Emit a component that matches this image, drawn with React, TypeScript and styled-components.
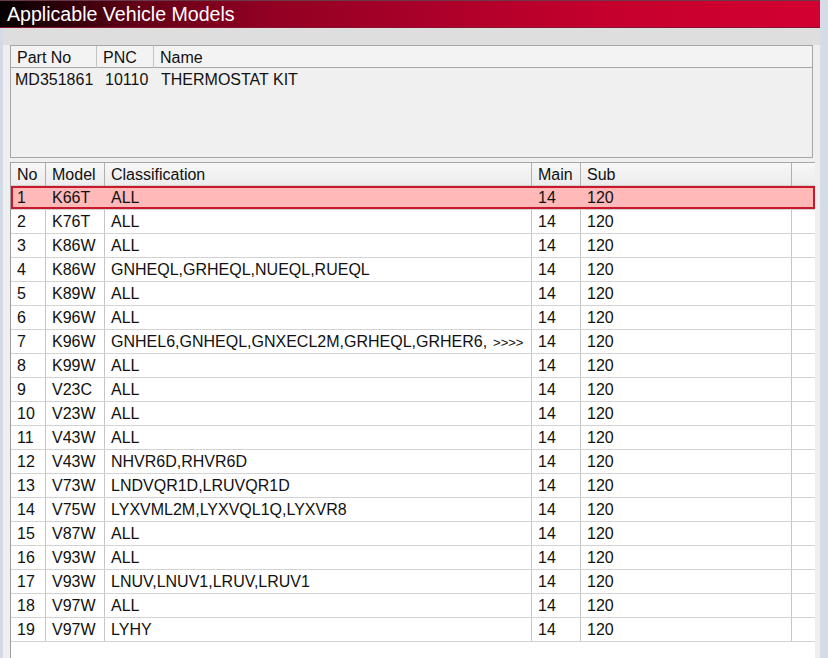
import React from "react";
import styled, { createGlobalStyle } from "styled-components";

const Global = createGlobalStyle`
  html, body { margin: 0; padding: 0; background: #d6dce6; }
  body { font-family: "Liberation Sans", Arial, sans-serif; }
`;

const Window = styled.div`
  width: 828px;
  height: 658px;
  display: flex;
  flex-direction: column;
  background: #d6dce6;
  overflow: hidden;
`;

const TitleBar = styled.div`
  width: 820px;
  height: 28px;
  flex: none;
  box-sizing: border-box;
  padding-left: 7px;
  padding-top: 1px;
  display: flex;
  align-items: center;
  color: #fff;
  font-size: 19.6px;
  border-top: 1px solid #6b3a4a;
  border-bottom: 1px solid #8a1030;
  background: linear-gradient(
    to right,
    #050002 0%,
    #2a0008 7%,
    #640017 17%,
    #900022 32%,
    #ae002a 55%,
    #c6002d 75%,
    #d20030 100%
  );
`;

const Body = styled.div`
  flex: 1;
  display: flex;
  min-height: 0;
`;

const LeftEdge = styled.div`
  width: 3px;
  flex: none;
  background: #d3dbe7;
`;

const Main = styled.div`
  width: 817px;
  flex: none;
  display: flex;
  flex-direction: column;
  background: #efefef;
  min-height: 0;
`;

const TopStrip = styled.div`
  height: 17px;
  flex: none;
  background: #dedede;
`;

const PartPanel = styled.div`
  margin: 0 7px 0 7px;
  height: 113px;
  flex: none;
  box-sizing: border-box;
  border: 1px solid #a6a6a6;
  background: #f0f0f0;
  display: flex;
  flex-direction: column;
`;

const PartHeader = styled.div`
  display: grid;
  grid-template-columns: 86px 57px 1fr;
  height: 21px;
  border-bottom: 1px solid #a6a6a6;
  background: #f3f3f3;
`;

const PartHeadCell = styled.div<{ $last?: boolean }>`
  font-size: 16px;
  color: #111;
  padding-left: 6px;
  padding-top: 1px;
  line-height: 21px;
  border-right: ${(p) => (p.$last ? "none" : "1px solid #c4c4c4")};
  white-space: nowrap;
`;

const PartRow = styled.div`
  display: grid;
  grid-template-columns: 90px 56px 1fr;
  height: 24px;
`;

const PartCell = styled.div`
  font-size: 16px;
  color: #111;
  padding-left: 4px;
  line-height: 24px;
  white-space: nowrap;
`;

const Gap = styled.div`
  height: 4px;
  flex: none;
`;

const GridArea = styled.div`
  margin-left: 7px;
  width: 805px;
  flex: 1;
  background: #ffffff;
  border-left: 1px solid #9c9c9c;
  border-top: 1px solid #a6a6a6;
  box-sizing: border-box;
  display: flex;
  flex-direction: column;
`;

const COLS = "35px 59px 427px 49px 211px 1fr";

const HeaderRow = styled.div`
  display: grid;
  grid-template-columns: ${COLS};
  height: 22px;
  background: linear-gradient(#f7f7f7, #ececec);
  border-bottom: 1px solid #d0d0d0;
`;

const HeadCell = styled.div<{ $last?: boolean }>`
  font-size: 16px;
  color: #111;
  padding-left: 6px;
  padding-top: 1px;
  line-height: 22px;
  border-right: ${(p) => (p.$last ? "none" : "1px solid #b0b0b0")};
  white-space: nowrap;
`;

const Row = styled.div<{ $selected?: boolean }>`
  display: grid;
  grid-template-columns: ${COLS};
  height: 24px;
  box-sizing: border-box;
  border-bottom: 1px solid #d2d2d2;
  background: ${(p) => (p.$selected ? "#ffb9b9" : "#ffffff")};
  box-shadow: ${(p) => (p.$selected ? "inset 0 0 0 2px #c8192b" : "none")};
`;

const Cell = styled.div<{ $last?: boolean; $hideLine?: boolean }>`
  font-size: 16px;
  color: #111;
  padding-left: 6px;
  line-height: 23px;
  white-space: nowrap;
  overflow: hidden;
  border-right: ${(p) =>
    p.$last || p.$hideLine ? "none" : "1px solid #c6c6c6"};
`;

const More = styled.span`
  font-size: 13px;
  margin-left: 6px;
`;

const RightEdge = styled.div`
  flex: 1;
  background: #d6dce6;
`;

type Item = { no: number; model: string; cls: string; more?: boolean };

const items: Item[] = [
  { no: 1, model: "K66T", cls: "ALL" },
  { no: 2, model: "K76T", cls: "ALL" },
  { no: 3, model: "K86W", cls: "ALL" },
  { no: 4, model: "K86W", cls: "GNHEQL,GRHEQL,NUEQL,RUEQL" },
  { no: 5, model: "K89W", cls: "ALL" },
  { no: 6, model: "K96W", cls: "ALL" },
  {
    no: 7,
    model: "K96W",
    cls: "GNHEL6,GNHEQL,GNXECL2M,GRHEQL,GRHER6,",
    more: true,
  },
  { no: 8, model: "K99W", cls: "ALL" },
  { no: 9, model: "V23C", cls: "ALL" },
  { no: 10, model: "V23W", cls: "ALL" },
  { no: 11, model: "V43W", cls: "ALL" },
  { no: 12, model: "V43W", cls: "NHVR6D,RHVR6D" },
  { no: 13, model: "V73W", cls: "LNDVQR1D,LRUVQR1D" },
  { no: 14, model: "V75W", cls: "LYXVML2M,LYXVQL1Q,LYXVR8" },
  { no: 15, model: "V87W", cls: "ALL" },
  { no: 16, model: "V93W", cls: "ALL" },
  { no: 17, model: "V93W", cls: "LNUV,LNUV1,LRUV,LRUV1" },
  { no: 18, model: "V97W", cls: "ALL" },
  { no: 19, model: "V97W", cls: "LYHY" },
];

export default function App() {
  return (
    <Window>
      <Global />
      <TitleBar>Applicable Vehicle Models</TitleBar>
      <Body>
        <LeftEdge />
        <Main>
          <TopStrip />
          <PartPanel>
            <PartHeader>
              <PartHeadCell>Part No</PartHeadCell>
              <PartHeadCell>PNC</PartHeadCell>
              <PartHeadCell $last>Name</PartHeadCell>
            </PartHeader>
            <PartRow>
              <PartCell>MD351861</PartCell>
              <PartCell>10110</PartCell>
              <PartCell>THERMOSTAT KIT</PartCell>
            </PartRow>
          </PartPanel>
          <Gap />
          <GridArea>
            <HeaderRow>
              <HeadCell>No</HeadCell>
              <HeadCell>Model</HeadCell>
              <HeadCell>Classification</HeadCell>
              <HeadCell>Main</HeadCell>
              <HeadCell>Sub</HeadCell>
              <HeadCell $last />
            </HeaderRow>
            {items.map((it) => {
              const sel = it.no === 1;
              return (
                <Row key={it.no} $selected={sel}>
                  <Cell $hideLine={sel}>{it.no}</Cell>
                  <Cell $hideLine={sel}>{it.model}</Cell>
                  <Cell $hideLine={sel}>
                    {it.cls}
                    {it.more && <More>&gt;&gt;&gt;&gt;</More>}
                  </Cell>
                  <Cell $hideLine={sel}>14</Cell>
                  <Cell $hideLine={sel}>120</Cell>
                  <Cell $last />
                </Row>
              );
            })}
          </GridArea>
        </Main>
        <RightEdge />
      </Body>
    </Window>
  );
}
